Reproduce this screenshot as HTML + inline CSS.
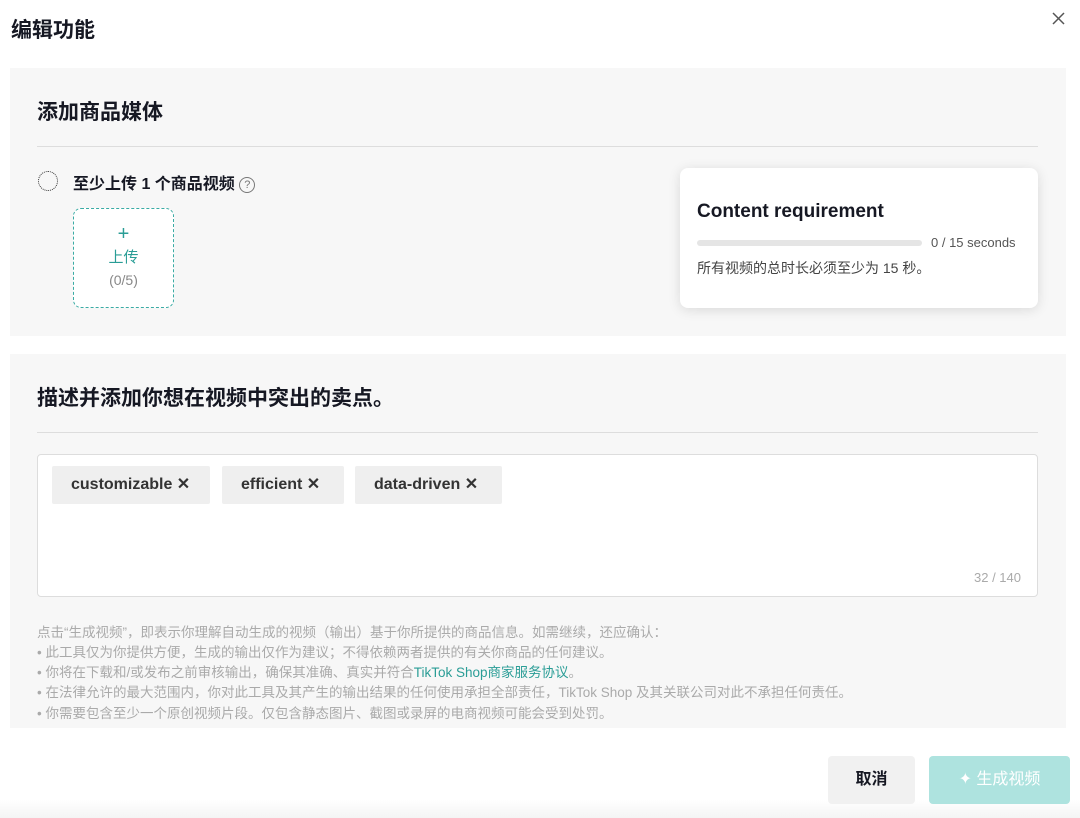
<!DOCTYPE html>
<html><head><meta charset="utf-8"><style>
*{margin:0;padding:0;box-sizing:border-box}
body{width:1080px;height:818px;background:#fff;font-family:"Liberation Sans","Noto Sans CJK SC",sans-serif;position:relative;overflow:hidden;color:#161823}
.abs{position:absolute}
.panel{position:absolute;left:10px;width:1056px;background:#f7f7f7}
.h{position:absolute;left:37px;font-size:21px;font-weight:600}
.div{position:absolute;left:37px;width:1001px;height:1px;background:#ddd}
.tag{position:absolute;top:466px;height:38px;background:#efefef;border-radius:2px;font-size:16px;font-weight:700;line-height:38px;padding-left:19px;color:#333}
.dis{position:absolute;left:37px;font-size:13.5px;color:#aaa;line-height:20px;white-space:nowrap}
</style></head><body>
<div class="abs" style="left:11px;top:14px;font-size:21px;font-weight:600">编辑功能</div>
<svg class="abs" style="left:1052px;top:12px" width="13" height="13" viewBox="0 0 13 13"><path d="M1 1L12 12M12 1L1 12" stroke="#555" stroke-width="1.5"/></svg>

<div class="panel" style="top:68px;height:268px"></div>
<div class="h" style="top:96px">添加商品媒体</div>
<div class="div" style="top:146px"></div>
<div class="abs" style="left:38px;top:171px;width:20px;height:20px;border:1.5px dotted #333;border-radius:50%"></div>
<div class="abs" style="left:73px;top:170px;font-size:16px;font-weight:600">至少上传 1 个商品视频 <span style="display:inline-block;width:16px;height:16px;border:1.3px solid #777;border-radius:50%;font-size:11px;line-height:14px;text-align:center;color:#777;vertical-align:1px;font-weight:400">?</span></div>
<div class="abs" style="left:73px;top:208px;width:101px;height:100px;border:1.5px dashed #3aaba4;border-radius:8px;background:#fff;text-align:center">
<div style="color:#2a9d96;font-size:20px;margin-top:13px;line-height:24px">+</div>
<div style="color:#2a9d96;font-size:15px;line-height:24px">上传</div>
<div style="color:#888;font-size:14px;line-height:20px">(0/5)</div></div>
<div class="abs" style="left:680px;top:168px;width:358px;height:140px;background:#fff;border-radius:8px;box-shadow:0 2px 12px rgba(0,0,0,.12)">
<div class="abs" style="left:17px;top:33px;font-size:19px;font-weight:700">Content requirement</div>
<div class="abs" style="left:17px;top:72px;width:225px;height:6px;background:#e5e5e5;border-radius:3px"></div>
<div class="abs" style="left:251px;top:67px;font-size:13px;color:#555">0 / 15 seconds</div>
<div class="abs" style="left:17px;top:90px;font-size:14px;color:#444">所有视频的总时长必须至少为 15 秒。</div>
</div>

<div class="panel" style="top:354px;height:374px"></div>
<div class="h" style="top:382px">描述并添加你想在视频中突出的卖点。</div>
<div class="div" style="top:432px"></div>
<div class="abs" style="left:37px;top:454px;width:1001px;height:143px;background:#fff;border:1px solid #ddd;border-radius:4px"></div>
<div class="tag" style="left:52px;width:158px">customizable ✕</div>
<div class="tag" style="left:222px;width:122px">efficient ✕</div>
<div class="tag" style="left:355px;width:147px">data-driven ✕</div>
<div class="abs" style="left:974px;top:570px;font-size:13px;color:#aaa">32 / 140</div>

<div class="dis" style="top:623px">点击“生成视频”，即表示你理解自动生成的视频（输出）基于你所提供的商品信息。如需继续，还应确认：</div>
<div class="dis" style="top:643px">• 此工具仅为你提供方便，生成的输出仅作为建议；不得依赖两者提供的有关你商品的任何建议。</div>
<div class="dis" style="top:663px">• 你将在下载和/或发布之前审核输出，确保其准确、真实并符合<span style="color:#2a9d96">TikTok Shop商家服务协议</span>。</div>
<div class="dis" style="top:683px">• 在法律允许的最大范围内，你对此工具及其产生的输出结果的任何使用承担全部责任，TikTok Shop 及其关联公司对此不承担任何责任。</div>
<div class="dis" style="top:704px">• 你需要包含至少一个原创视频片段。仅包含静态图片、截图或录屏的电商视频可能会受到处罚。</div>

<div class="abs" style="left:0;top:800px;width:1080px;height:18px;background:linear-gradient(#fff,#f4f4f4)"></div>
<div class="abs" style="left:828px;top:756px;width:87px;height:48px;background:#f1f1f1;border-radius:4px;font-size:16px;font-weight:600;text-align:center;line-height:48px">取消</div>
<div class="abs" style="left:929px;top:756px;width:141px;height:48px;background:#aee3df;border-radius:4px;font-size:16px;color:#fff;text-align:center;line-height:48px">✦ 生成视频</div>
</body></html>
